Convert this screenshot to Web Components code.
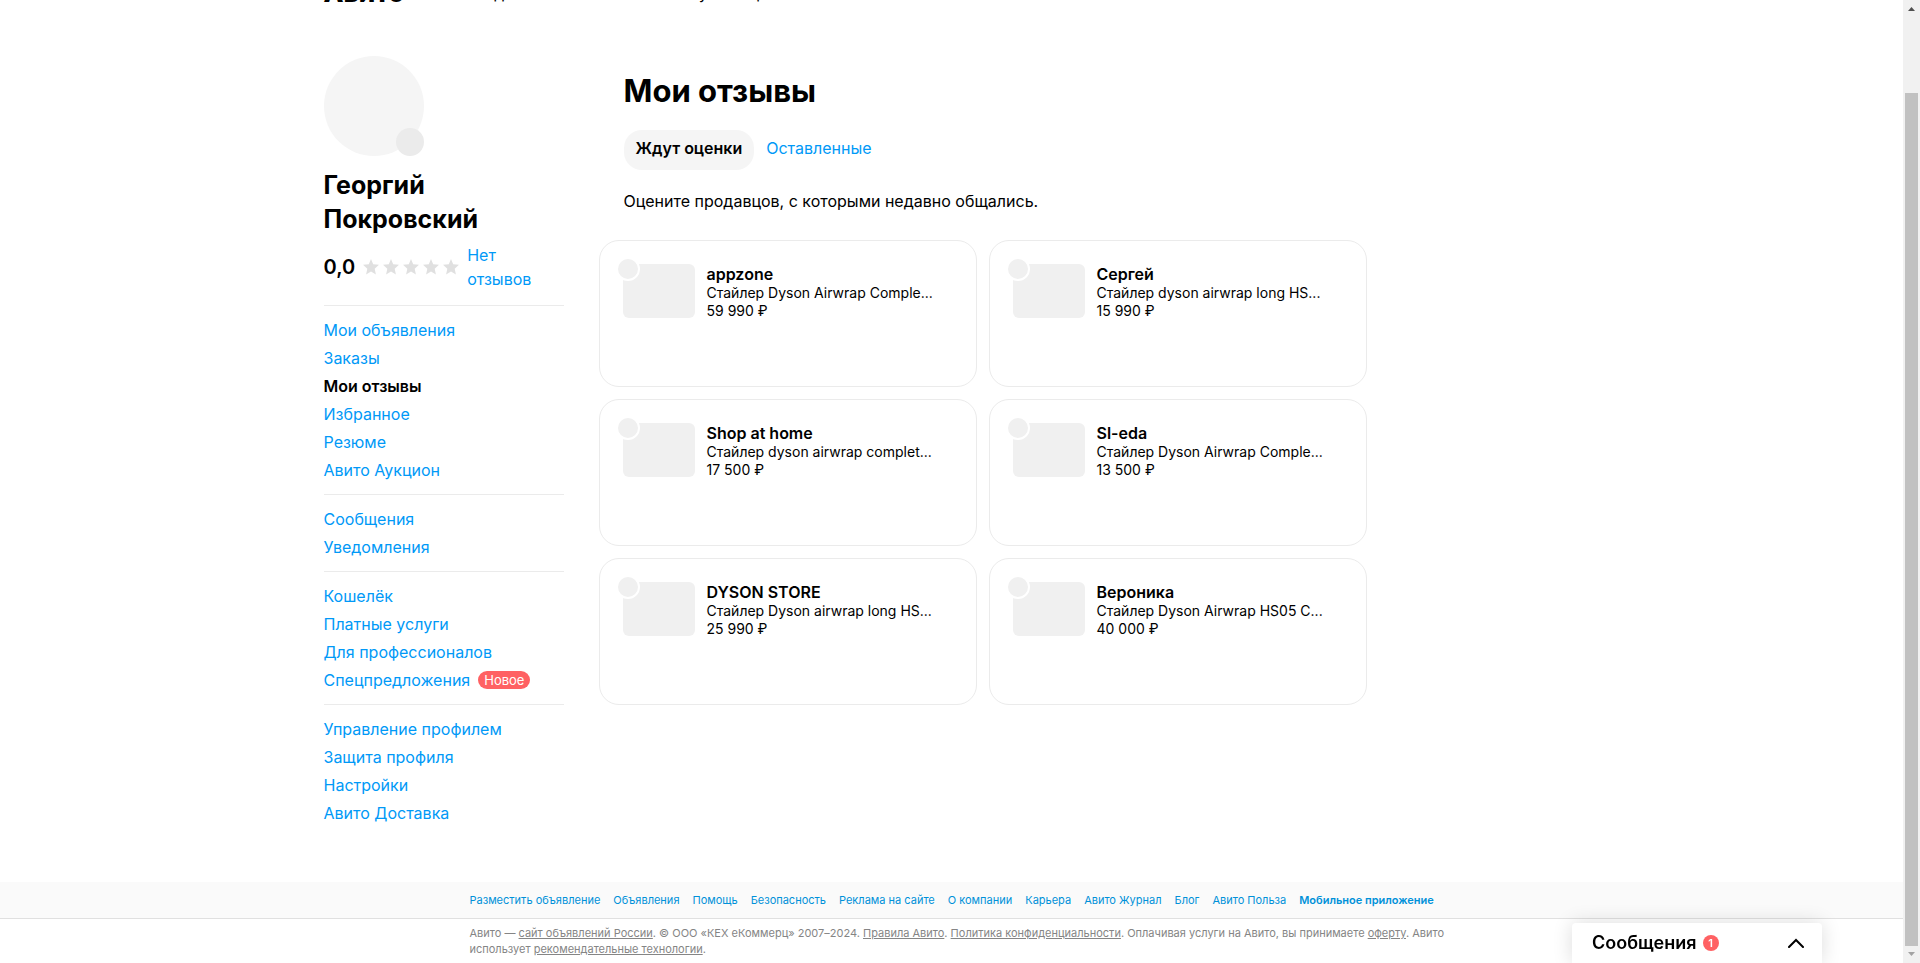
<!DOCTYPE html>
<html lang="ru">
<head>
    <meta charset="utf-8">
    <meta name="viewport" content="width=device-width, initial-scale=1">
    <title>Мои отзывы</title>
    <style>
        body{
            margin: 0;
            background: #fff;
            color: #000;
            font-family: Inter, 'Open Sans', sans-serif;
            font-size: 16px;
            line-height: 24px;
            --link: #0099f7;
            --line: #ebebeb;
        }
    </style>
</head>
<body>
    <app-page>
        <site-header slot="header"></site-header>

        <profile-sidebar slot="sidebar" name="Георгий Покровский" score="0,0">
            <nav-group>
                <nav-item>Мои объявления</nav-item>
                <nav-item>Заказы</nav-item>
                <nav-item current>Мои отзывы</nav-item>
                <nav-item>Избранное</nav-item>
                <nav-item>Резюме</nav-item>
                <nav-item>Авито Аукцион</nav-item>
            </nav-group>
            <nav-group>
                <nav-item>Сообщения</nav-item>
                <nav-item>Уведомления</nav-item>
            </nav-group>
            <nav-group>
                <nav-item>Кошелёк</nav-item>
                <nav-item>Платные услуги</nav-item>
                <nav-item>Для профессионалов</nav-item>
                <nav-item badge="Новое">Спецпредложения</nav-item>
            </nav-group>
            <nav-group>
                <nav-item>Управление профилем</nav-item>
                <nav-item>Защита профиля</nav-item>
                <nav-item>Настройки</nav-item>
                <nav-item>Авито Доставка</nav-item>
            </nav-group>
        </profile-sidebar>

        <reviews-section>
            <review-card name="appzone" item="Стайлер Dyson Airwrap Comple..." price="59 990 ₽"></review-card>
            <review-card name="Сергей" item="Стайлер dyson airwrap long HS..." price="15 990 ₽"></review-card>
            <review-card name="Shop at home" item="Стайлер dyson airwrap complet..." price="17 500 ₽"></review-card>
            <review-card name="Sl-eda" item="Стайлер Dyson Airwrap Comple..." price="13 500 ₽"></review-card>
            <review-card name="DYSON STORE" item="Стайлер Dyson airwrap long HS..." price="25 990 ₽"></review-card>
            <review-card name="Вероника" item="Стайлер Dyson Airwrap HS05 C..." price="40 000 ₽"></review-card>
        </reviews-section>

        <site-footer slot="footer"></site-footer>
    </app-page>
    <messages-bar count="1">Сообщения</messages-bar>

    <script>
        class BaseElement extends HTMLElement{
            constructor(html){
                super();
                this.attachShadow({ mode: 'open' });
                const template = document.createElement('template');
                template.innerHTML = html;
                this.shadowRoot.appendChild(template.content.cloneNode(true));
            }

            fill(selector, attribute){
                this.shadowRoot.querySelector(selector).textContent = this.getAttribute(attribute);
            }
        }

        class AppPage extends BaseElement{
            constructor(){
                super(`
                    <style>
                    :host{
                        display: grid;
                        grid-template-columns: minmax(0, 1fr) 17px;
                        min-height: 100vh;
                        overflow: hidden;
                    }

                    .page{
                        display: flex;
                        flex-direction: column;
                        min-width: 0;
                    }

                    .layout{
                        display: flex;
                        flex: 1;
                        gap: 35px;
                        box-sizing: border-box;
                        width: 100%;
                        max-width: 1256px;
                        margin: 0 auto;
                        padding-bottom: 44px;
                    }

                    .sidebar{
                        flex: none;
                        width: 240px;
                    }

                    main{
                        flex: 1;
                        min-width: 0;
                    }
                    </style>

                    <div class="page">
                        <slot name="header"></slot>
                        <div class="layout">
                            <div class="sidebar"><slot name="sidebar"></slot></div>
                            <main><slot></slot></main>
                        </div>
                        <slot name="footer"></slot>
                    </div>
                    <scroll-rail></scroll-rail>
                `);
            }
        }

        class ScrollRail extends BaseElement{
            constructor(){
                super(`
                    <style>
                    :host{
                        display: flex;
                        flex-direction: column;
                        background: #f1f1f1;
                    }

                    svg{
                        display: block;
                        flex: none;
                    }

                    .track{
                        display: flex;
                        flex: 1;
                        padding: 76px 2px 0;
                    }

                    .thumb{
                        flex: 1;
                        background: #c1c1c1;
                    }
                    </style>

                    <svg width="17" height="17"><path d="M5 11h7L8.500 7z" fill="#505050"/></svg>
                    <div class="track"><div class="thumb"></div></div>
                    <svg width="17" height="17"><path d="M5 6h7L8.500 10z" fill="#a3a3a3"/></svg>
                `);
            }
        }

        /* The header is scrolled away, only the bottom edge stays in view */
        class SiteHeader extends BaseElement{
            constructor(){
                super(`
                    <style>
                    :host{
                        display: block;
                        box-sizing: border-box;
                        width: 100%;
                        max-width: 1256px;
                        height: 83px;
                        margin: -27px auto 0;
                    }

                    header{
                        display: flex;
                        align-items: flex-end;
                        gap: 20px;
                    }

                    .logo{
                        font-size: 26px;
                        font-weight: 800;
                        line-height: 40px;
                    }

                    a{
                        color: #000;
                        text-decoration: none;
                    }

                    nav{
                        display: flex;
                        gap: 12px;
                        padding-bottom: 8px;
                    }
                    </style>

                    <header>
                        <a class="logo" href="#">Авито</a>
                        <nav>
                            <a href="#">Авто</a>
                            <a href="#">Недвижимость</a>
                            <a href="#">Работа</a>
                            <a href="#">Услуги</a>
                            <a href="#">ещё</a>
                        </nav>
                    </header>
                `);
            }
        }

        class ProfileSidebar extends BaseElement{
            constructor(){
                super(`
                    <style>
                    :host{
                        display: block;
                    }

                    .avatar{
                        position: relative;
                        width: 100px;
                        height: 100px;
                        border-radius: 50%;
                        background: #f5f5f5;
                    }

                    .avatar::after{
                        content: '';
                        position: absolute;
                        right: 0;
                        bottom: 0;
                        width: 28px;
                        height: 28px;
                        border-radius: 50%;
                        background: #ebebeb;
                    }

                    h2{
                        width: min-content;
                        margin: 12px 0 7px;
                        font-size: 25px;
                        font-weight: 700;
                        line-height: 34px;
                    }

                    .rating{
                        display: flex;
                        align-items: center;
                        gap: 8px;
                        margin-bottom: 14px;
                    }

                    .score{
                        font-size: 20px;
                        font-weight: 600;
                    }

                    .stars{
                        display: flex;
                        gap: 4px;
                        fill: #e0e0e0;
                    }

                    .rating a{
                        flex: 1;
                        max-width: min-content;
                        color: var(--link);
                        text-decoration: none;
                    }
                    </style>

                    <div class="avatar"></div>
                    <h2></h2>
                    <div class="rating">
                        <span class="score"></span>
                        <span class="stars"></span>
                        <a href="#">Нет отзывов</a>
                    </div>
                    <nav><slot></slot></nav>
                `);
                this.fill('h2', 'name');
                this.fill('.score', 'score');
                this.shadowRoot.querySelector('.stars').innerHTML =
                    '<svg width="16" height="16" viewBox="0 0 16 16"><path d="M8 0l2.200 5.300 5.800.500-4.300 3.900 1.200 5.800L8 12.500l-4.900 3 1.200-5.800L0 5.800l5.800-.500z"/></svg>'.repeat(5);
            }
        }

        class NavGroup extends BaseElement{
            constructor(){
                super(`
                    <style>
                    :host{
                        display: flex;
                        flex-direction: column;
                        padding: 10px 0;
                        border-top: 1px solid var(--line);
                    }
                    </style>
                    <slot></slot>
                `);
            }
        }

        class NavItem extends BaseElement{
            constructor(){
                super(`
                    <style>
                    :host{
                        display: flex;
                        align-items: center;
                        gap: 8px;
                        line-height: 28px;
                    }

                    a{
                        color: var(--link);
                        text-decoration: none;
                    }

                    :host([current]) a{
                        color: #000;
                        font-weight: 600;
                    }

                    .badge{
                        padding: 0 6px;
                        border-radius: 9px;
                        background: #ff6163;
                        color: #fff;
                        font-size: 13px;
                        line-height: 18px;
                    }
                    </style>
                    <a href="#"><slot></slot></a>
                `);
                if(this.hasAttribute('badge')){
                    const badge = document.createElement('span');
                    badge.className = 'badge';
                    badge.textContent = this.getAttribute('badge');
                    this.shadowRoot.appendChild(badge);
                }
            }
        }

        class ReviewsSection extends BaseElement{
            constructor(){
                super(`
                    <style>
                    :host{
                        display: block;
                        max-width: 768px;
                    }

                    .top{
                        padding: 15px 25px 0;
                    }

                    h1{
                        margin: 0 0 19px;
                        font-size: 31px;
                        font-weight: 700;
                        line-height: 40px;
                    }

                    .tabs{
                        display: flex;
                        gap: 12px;
                    }

                    button{
                        height: 40px;
                        padding: 0 0 4px;
                        border: 0;
                        border-radius: 18px;
                        background: none;
                        color: var(--link);
                        font: inherit;
                        cursor: pointer;
                    }

                    button[aria-selected=true]{
                        padding: 0 12px 4px;
                        background: #f5f5f5;
                        color: #000;
                        font-weight: 600;
                    }

                    p{
                        margin: 19px 0 27px;
                    }

                    .cards{
                        display: grid;
                        grid-template-columns: repeat(2, minmax(0, 1fr));
                        gap: 12px;
                    }
                    </style>

                    <div class="top">
                        <h1>Мои отзывы</h1>
                        <div class="tabs" role="tablist">
                            <button role="tab" aria-selected="true">Ждут оценки</button>
                            <button role="tab" aria-selected="false">Оставленные</button>
                        </div>
                        <p>Оцените продавцов, с которыми недавно общались.</p>
                    </div>
                    <div class="cards"><slot></slot></div>
                `);
            }
        }

        class ReviewCard extends BaseElement{
            constructor(){
                super(`
                    <style>
                    :host{
                        display: flex;
                        gap: 12px;
                        box-sizing: border-box;
                        min-height: 147px;
                        padding: 23px;
                        border: 1px solid var(--line);
                        border-radius: 20px;
                    }

                    .photo{
                        position: relative;
                        flex: none;
                        width: 72px;
                        height: 54px;
                        border-radius: 6px;
                        background: #f0f0f0;
                    }

                    .photo::before{
                        content: '';
                        position: absolute;
                        left: -7px;
                        top: -7px;
                        width: 20px;
                        height: 20px;
                        border: 2px solid #fff;
                        border-radius: 50%;
                        background: #f0f0f0;
                    }

                    .info{
                        display: flex;
                        flex-direction: column;
                        min-width: 0;
                        font-size: 14px;
                        line-height: 18px;
                    }

                    .name{
                        font-size: 16px;
                        line-height: 20px;
                    }

                    strong{
                        font-weight: 600;
                    }
                    </style>

                    <div class="photo"></div>
                    <div class="info">
                        <strong class="name"></strong>
                        <span class="item"></span>
                        <span class="price"></span>
                    </div>
                `);
                this.fill('.name', 'name');
                this.fill('.item', 'item');
                this.fill('.price', 'price');
            }
        }

        class SiteFooter extends BaseElement{
            constructor(){
                super(`
                    <style>
                    :host{
                        display: block;
                        font-size: 11px;
                        line-height: 16px;
                    }

                    .bar{
                        border-bottom: 1px solid #e0e0e0;
                        background: #fafafa;
                    }

                    nav, p{
                        box-sizing: border-box;
                        max-width: 990px;
                        margin: 0 auto;
                    }

                    nav{
                        display: flex;
                        flex-wrap: wrap;
                        column-gap: 13px;
                        padding: 10px 0 10px 13px;
                    }

                    nav a{
                        color: #0091d9;
                        text-decoration: none;
                    }

                    nav a:last-child{
                        font-weight: 600;
                    }

                    p{
                        padding: 6px 0 6px 13px;
                        color: #858585;
                    }

                    p a{
                        color: inherit;
                    }
                    </style>

                    <footer>
                        <div class="bar">
                            <nav>
                                <a href="#">Разместить объявление</a>
                                <a href="#">Объявления</a>
                                <a href="#">Помощь</a>
                                <a href="#">Безопасность</a>
                                <a href="#">Реклама на сайте</a>
                                <a href="#">О компании</a>
                                <a href="#">Карьера</a>
                                <a href="#">Авито Журнал</a>
                                <a href="#">Блог</a>
                                <a href="#">Авито Польза</a>
                                <a href="#">Мобильное приложение</a>
                            </nav>
                        </div>
                        <p>Авито — <a href="#">сайт объявлений России</a>. © ООО «КЕХ еКоммерц» 2007–2024. <a href="#">Правила Авито</a>. <a href="#">Политика конфиденциальности</a>. Оплачивая услуги на Авито, вы принимаете <a href="#">оферту</a>. Авито использует <a href="#">рекомендательные технологии</a>.</p>
                    </footer>
                `);
            }
        }

        class MessagesBar extends BaseElement{
            constructor(){
                super(`
                    <style>
                    :host{
                        position: fixed;
                        right: 98px;
                        bottom: 0;
                        width: 250px;
                    }

                    button{
                        display: flex;
                        align-items: center;
                        gap: 6px;
                        box-sizing: border-box;
                        width: 100%;
                        height: 40px;
                        padding: 0 18px 0 20px;
                        border: 0;
                        border-radius: 4px 4px 0 0;
                        background: #fff;
                        box-shadow: 0 0 20px rgba(0, 0, 0, 0.14);
                        color: #000;
                        font: inherit;
                        font-size: 18px;
                        font-weight: 600;
                        cursor: pointer;
                    }

                    .count{
                        width: 16px;
                        border-radius: 50%;
                        background: #ff6163;
                        color: #fff;
                        font-size: 11px;
                        line-height: 16px;
                        text-align: center;
                    }

                    svg{
                        margin-left: auto;
                    }
                    </style>

                    <button>
                        <slot></slot>
                        <span class="count"></span>
                        <svg width="16" height="10" viewBox="0 0 16 10" fill="none" stroke="#000" stroke-width="2" stroke-linecap="round"><path d="M1 9l7-7 7 7"/></svg>
                    </button>
                `);
                this.fill('.count', 'count');
            }
        }

        window.customElements.define('scroll-rail', ScrollRail);
        window.customElements.define('site-header', SiteHeader);
        window.customElements.define('nav-item', NavItem);
        window.customElements.define('nav-group', NavGroup);
        window.customElements.define('profile-sidebar', ProfileSidebar);
        window.customElements.define('review-card', ReviewCard);
        window.customElements.define('reviews-section', ReviewsSection);
        window.customElements.define('site-footer', SiteFooter);
        window.customElements.define('messages-bar', MessagesBar);
        window.customElements.define('app-page', AppPage);
    </script>
</body>
</html>
